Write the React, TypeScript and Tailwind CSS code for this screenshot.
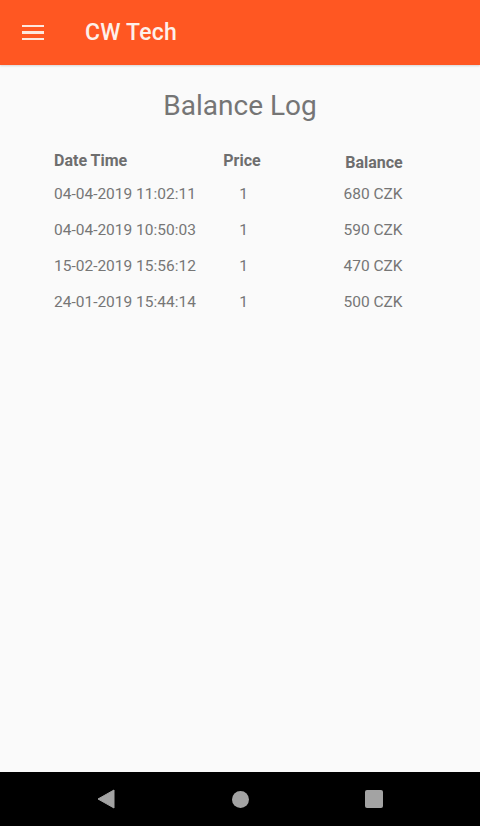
import React from "react";

const rows = [
  ["04-04-2019 11:02:11", "1", "680 CZK"],
  ["04-04-2019 10:50:03", "1", "590 CZK"],
  ["15-02-2019 15:56:12", "1", "470 CZK"],
  ["24-01-2019 15:44:14", "1", "500 CZK"],
];

export default function App() {
  return (
    <div
      className="w-[480px] h-[826px] flex flex-col bg-[#fafafa]"
      style={{ fontFamily: "Roboto, 'Noto Sans', sans-serif" }}
    >
      <div className="h-[65px] bg-[#ff5722] flex items-center shadow-[0_1px_2px_rgba(0,0,0,0.15)] z-10">
        <div className="w-[22px] ml-[22px] flex flex-col gap-[4px]">
          <div className="h-[2.5px] bg-[#fde7de]" />
          <div className="h-[2.5px] bg-[#fde7de]" />
          <div className="h-[2.5px] bg-[#fde7de]" />
        </div>
        <div className="ml-[41px] mt-[2px] text-[23px] font-medium text-[#fdf0ea] tracking-[0.2px]">CW Tech</div>
      </div>
      <div className="flex-1 flex flex-col">
        <div className="mt-[23px] text-center text-[28px] text-[#757575] leading-[36px]">Balance Log</div>
        <div className="mt-[24px] pl-[54px] flex text-[16px] font-bold text-[#6e6e6e]">
          <div className="w-[150px] leading-[20px] pt-[3px]">Date Time</div>
          <div className="w-[76px] text-center leading-[20px] pt-[3px]">Price</div>
          <div className="w-[188px] text-center leading-[20px] pt-[5px]">Balance</div>
        </div>
        <div className="mt-[4px] pl-[54px] flex flex-col text-[15.5px] text-[#767676]">
          {rows.map((r, i) => (
            <div key={i} className="flex h-[36px] items-center">
              <div className="w-[150px]">{r[0]}</div>
              <div className="w-[76px] text-center pl-[3px]">{r[1]}</div>
              <div className="w-[186px] text-center">{r[2]}</div>
            </div>
          ))}
        </div>
      </div>
      <div className="h-[54px] bg-black flex items-center justify-between px-[97px]">
        <svg width="18" height="20" viewBox="0 0 18 20">
          <path d="M17 1 L1 10 L17 19 Z" fill="#a3a3a3" stroke="#a3a3a3" strokeLinejoin="round" strokeWidth="1" />
        </svg>
        <div className="w-[17px] h-[17px] rounded-full bg-[#a3a3a3]" />
        <div className="w-[18px] h-[18px] rounded-[2px] bg-[#a3a3a3]" />
      </div>
    </div>
  );
}
